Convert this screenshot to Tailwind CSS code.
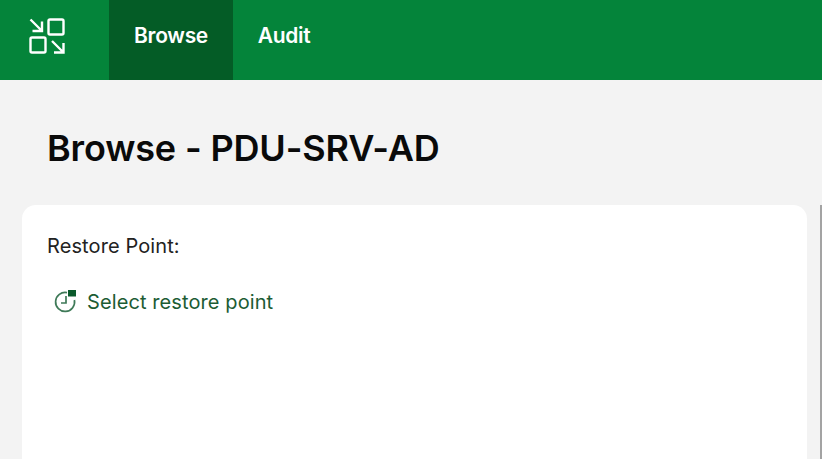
<!DOCTYPE html>
<html lang="en">
<head>
    <meta charset="UTF-8">
    <title>Browse - PDU-SRV-AD</title>
    <script src="https://cdn.jsdelivr.net/npm/@tailwindcss/browser@4"></script>
</head>
<body class="bg-[#f3f3f3] font-['Inter',sans-serif] h-[459px] w-[822px] overflow-hidden flex flex-col">
    <!-- Header -->
    <header class="bg-[#04843a] h-[80px] flex text-white shrink-0">
        <div class="w-[109px] flex items-center pl-[28px] pb-[8px]">
            <svg width="38" height="38" viewBox="0 0 38 38" fill="none" stroke="white" stroke-width="2.4">
                <rect x="20.5" y="2.5" width="15" height="15" rx="1.5"/>
                <rect x="2.5" y="20.5" width="15" height="15" rx="1.5"/>
                <path d="M2.5 2.5 L14 14 M14 4.5 V14 H4.5"/>
                <path d="M24 24 L35.5 35.5 M35.5 26 V35.5 H26"/>
            </svg>
        </div>
        <nav class="flex text-[21px] font-semibold tracking-[-0.3px]">
            <a class="w-[124px] pb-[8px] bg-[#045c26] flex items-center justify-center">Browse</a>
            <a class="w-[102px] pb-[8px] flex items-center justify-center">Audit</a>
        </nav>
    </header>

    <!-- Main -->
    <h1 class="text-[36px] font-semibold text-[#0a0a0a] tracking-[-0.15px] pl-[47px] pt-[46px] leading-[44px] h-[125px] shrink-0">Browse - PDU-SRV-AD</h1>
    <div class="flex flex-1">
        <div class="bg-white rounded-t-[14px] ml-[22px] w-[785px] pl-[25px] pt-[29px]">
            <p class="text-[20px] leading-[24px] tracking-[0.1px] text-[#222]">Restore Point:</p>
            <div class="flex items-center gap-[9px] mt-[32px] ml-[7px] text-[#1c5c34] text-[20px] leading-[24px] tracking-[0.1px]">
                <svg width="24" height="24" viewBox="0 0 24 24" fill="none" stroke="#3f7a58" stroke-width="1.7">
                    <path d="M13 2.6 A9.5 9.5 0 1 0 20.4 10"/>
                    <path d="M12 6 V13 H7"/>
                    <path d="M14 0 H22 V6.5 H14 Z" fill="#0b5a2c" stroke="none"/>
                </svg>
                <span>Select restore point</span>
            </div>
        </div>
        <div class="ml-[13px] w-[2px] bg-[#a3a3a3]"></div>
    </div>
</body>
</html>
